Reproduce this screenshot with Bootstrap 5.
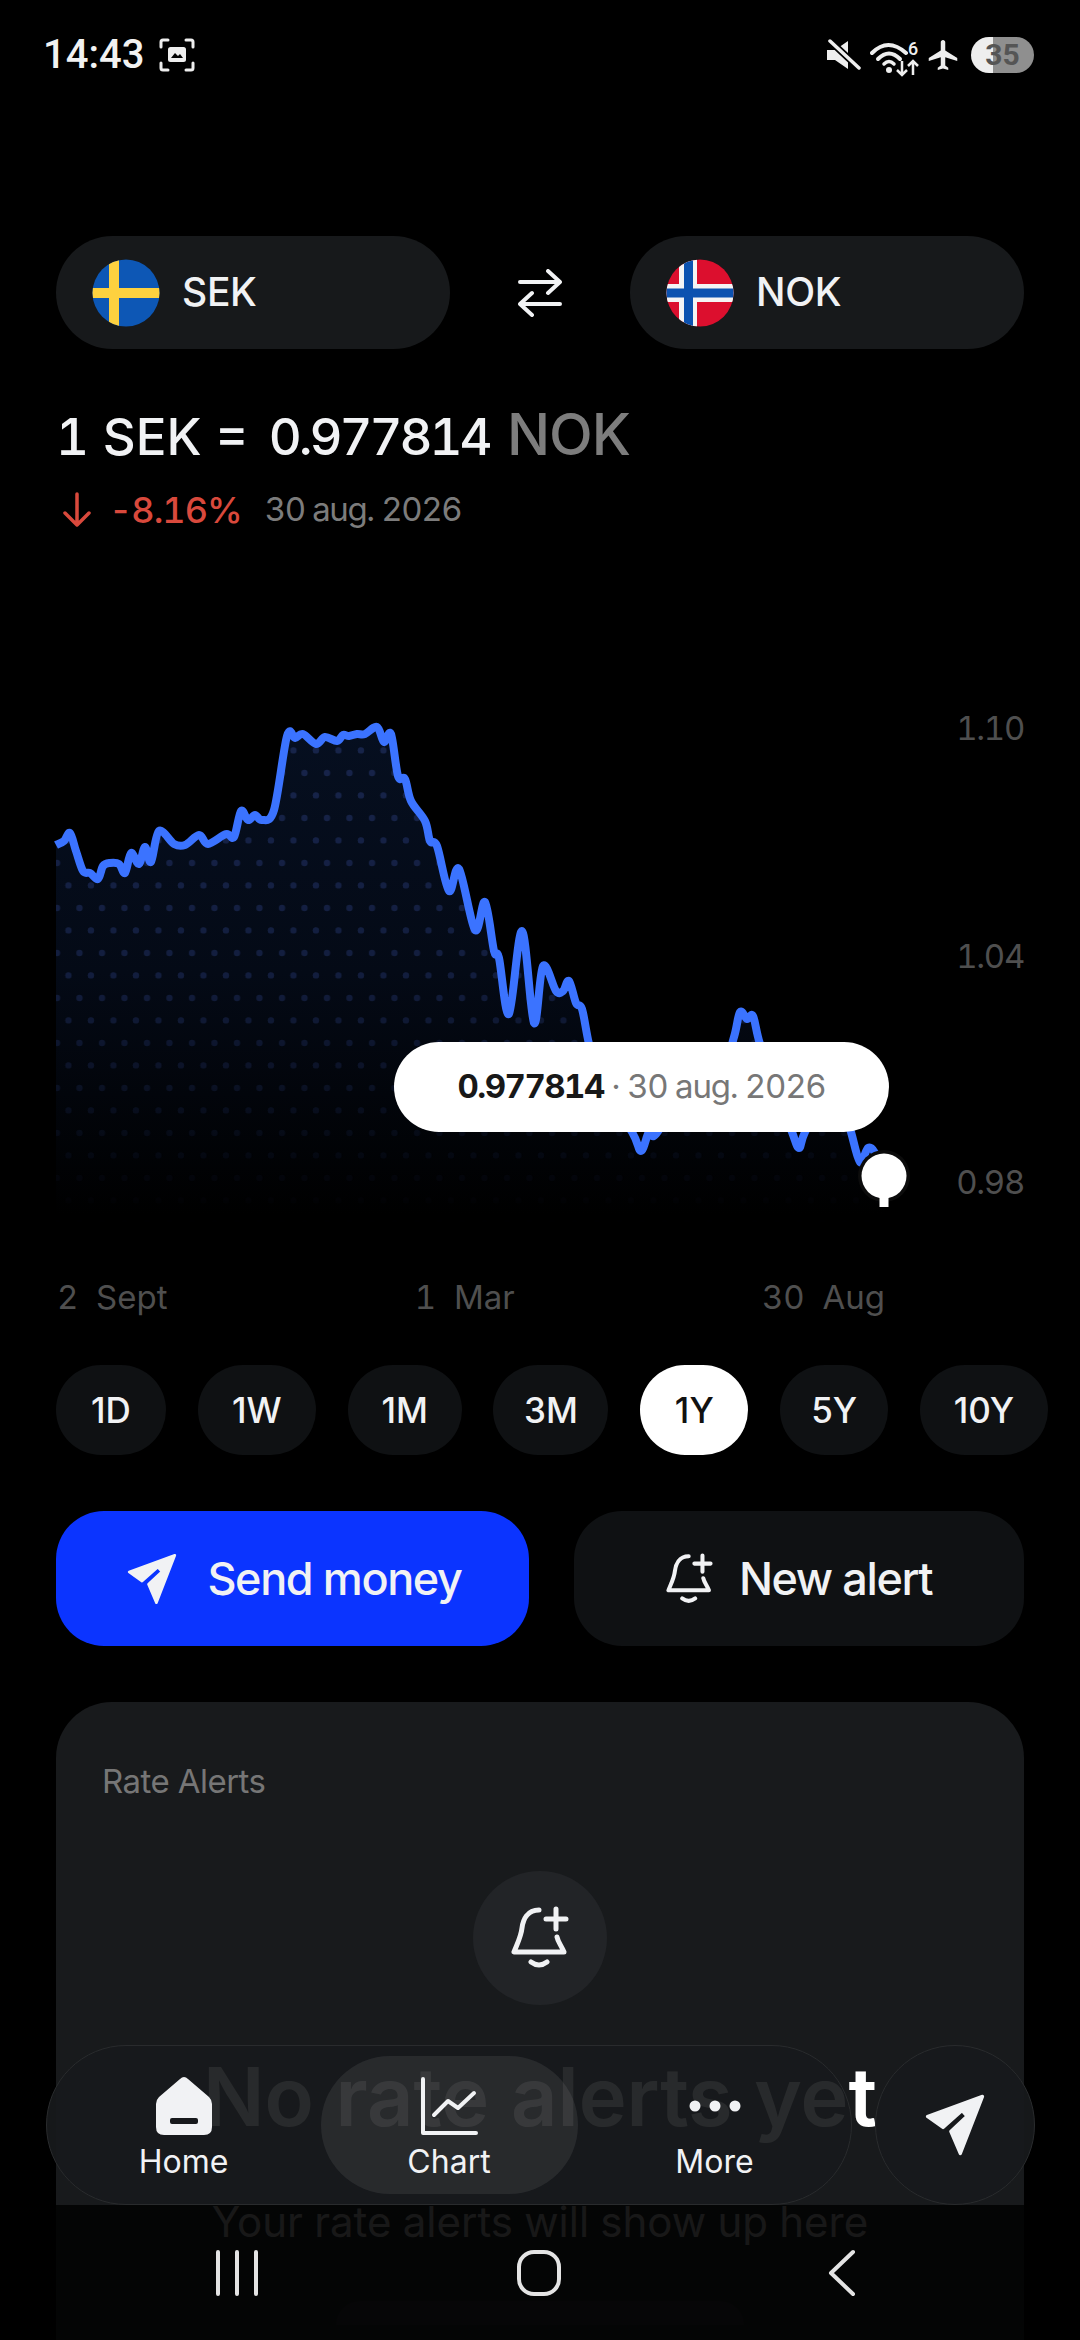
<!DOCTYPE html>
<html lang="en">
<head>
  <meta charset="UTF-8"/>
  <meta name="viewport" content="width=device-width, initial-scale=1.0"/>
  <title>SEK / NOK chart</title>
  <link href="https://cdn.jsdelivr.net/npm/bootstrap@5.3.0/dist/css/bootstrap.min.css" rel="stylesheet"/>
  <script src="https://cdn.jsdelivr.net/npm/bootstrap@5.3.0/dist/js/bootstrap.bundle.min.js" defer></script>
  <style>
    :root { --app-white: #f1f2f4; --app-pill: #17191b; --app-dark-btn: #0f1113; }

    body {
      width: 1080px;
      height: 2340px;
      overflow: hidden;
      background: #000;
      color: var(--app-white);
      font-family: "Inter", "Liberation Sans", sans-serif;
      font-variant-numeric: tabular-nums;
      position: relative;
    }

    /* status bar */
    .sbar { height: 110px; padding: 0 46px 0 43px; }
    .sbar-time { font: 500 40px/1 "Roboto", sans-serif; color: #f2f2f2; margin-right: 15px; }
    .sbar-batt {
      width: 63px; height: 36px; border-radius: 18px; margin-left: 13px;
      background: linear-gradient(90deg, #eeeeee 35%, #8f8f8f 35%);
      color: #555; font: 700 30px/36px "Roboto", sans-serif; text-align: center;
    }

    /* currency selectors */
    .pair { margin-top: 126px; padding: 0 56px; }
    .cur-pill {
      width: 394px; height: 113px; border-radius: 57px; background: var(--app-pill);
      padding-left: 36px; gap: 22px; font-size: 39px; font-weight: 500; letter-spacing: -0.3px;
    }
    .cur-flag { width: 68px; height: 68px; }

    .rate-line {
      margin: 50px 0 0 56px; height: 72px; line-height: 72px;
      font-size: 51px; font-weight: 500; white-space: pre;
    }
    .rate-num { letter-spacing: -3px; margin-left: -7px; }
    .rate-unit { font-size: 57px; color: #7d7d7d; letter-spacing: -1px; margin-left: 3px; }
    .change-row { margin: 17px 0 0 62px; height: 44px; }
    .change-pct { color: #d9493c; font-size: 36px; font-weight: 500; margin-left: 17px; letter-spacing: -1px; }
    .change-date { color: #7c7c7c; font-size: 33px; margin-left: 23px; letter-spacing: -1.4px; }

    /* chart */
    .chart-box { margin-top: 168px; height: 540px; position: relative; }
    .y-tick { position: absolute; right: 56px; color: #4f4f4f; font-size: 33px; line-height: 40px; letter-spacing: -1.3px; }
    .chart-tip {
      position: absolute; left: 394px; top: 342px; width: 495px; height: 90px; border-radius: 45px;
      background: #fff; color: #777; font-size: 33px; letter-spacing: -1.25px;
    }
    .chart-tip b { color: #181818; font-weight: 700; letter-spacing: -1.5px; }
    .x-ticks {
      margin: 37px 0 0 57px; width: 828px; height: 40px; line-height: 40px;
      color: #4f4f4f; font-size: 33px; white-space: pre;
    }

    /* range selector */
    .range-row { margin-top: 48px; padding: 0 32px 0 56px; }
    .range-btn {
      width: 108px; height: 90px; border-radius: 45px; border: 0; padding: 0;
      background: var(--app-dark-btn); color: var(--app-white); font-size: 35px; font-weight: 500;
    }
    .range-btn:nth-child(1) { width: 110px; }
    .range-btn:nth-child(2) { width: 118px; }
    .range-btn:nth-child(3) { width: 114px; }
    .range-btn:nth-child(4) { width: 115px; }
    .range-btn:nth-child(7) { width: 128px; }
    .range-btn.is-on { background: #fff; color: #111; }

    /* action buttons */
    .act-row { margin-top: 56px; padding: 0 56px; }
    .act-btn {
      height: 135px; border-radius: 48px; border: 0; gap: 26px;
      font-size: 45px; font-weight: 500; letter-spacing: -1.4px; color: var(--app-white);
    }
    .act-send { width: 473px; background: #0b34ff; }
    .act-send:hover, .act-send:active { background: #0b34ff; color: var(--app-white); }
    .act-alert { width: 450px; background: var(--app-dark-btn); }
    .ico-plane { width: 58px; height: 58px; fill: currentColor; stroke: currentColor; stroke-width: 3; stroke-linejoin: round; }
    .ico-plane-lg { width: 70px; height: 70px; color: var(--app-white); }
    .ico-bell { fill: none; stroke: currentColor; stroke-width: 5; stroke-linecap: round; stroke-linejoin: round; }

    /* alerts panel */
    .alert-panel {
      margin: 56px 56px 0; height: 638px; border: 0; border-radius: 56px 56px 0 0;
      background: #181a1c; color: var(--app-white); padding-top: 59px;
    }
    .panel-head { margin-left: 46px; font-size: 33px; line-height: 40px; color: #767676; letter-spacing: -0.5px; }
    .panel-ico {
      width: 134px; height: 134px; margin: 70px auto 0; background: #222427;
    }
    .panel-title { margin: 42px 0 0; text-align: center; font-size: 81px; line-height: 100px; font-weight: 600; color: #fff; }
    .panel-sub { margin: 50px 0 0; text-align: center; font-size: 42px; line-height: 50px; color: #7b7b7b; }
    .panel-cta { width: 408px; height: 24px; margin: 54px auto 0; border-radius: 55px 55px 0 0; background: #1f2123; }

    /* bottom navigation */
    .bottom-shade { position: absolute; left: 0; right: 0; top: 2205px; bottom: 0; background: rgba(0, 0, 0, .8); }
    .float-bar {
      position: absolute; top: 2045px; height: 160px; border-radius: 80px;
      background: rgba(24, 26, 28, .93); border: 1.5px solid #292b2d;
    }
    .float-tabs { left: 46px; width: 806px; padding: 0 8px; }
    .float-send { left: 875px; width: 160px; }
    .tab-item {
      width: 257px; height: 138px; border-radius: 69px; gap: 8px;
      font-size: 32px; line-height: 38px; color: var(--app-white); padding-top: 8px;
    }
    .tab-item.is-on { background: rgba(255, 255, 255, .075); }
    .tab-ico { width: 58px; height: 58px; }

    .sys-nav { position: absolute; left: 0; right: 0; top: 2248px; height: 50px; }
    .sys-nav svg { position: absolute; top: 0; stroke: #e4e4e4; fill: none; stroke-width: 4; stroke-linecap: round; stroke-linejoin: round; }
    .sys-recent { left: 214px; }
    .sys-home { left: 514px; }
    .sys-back { left: 824px; }
  </style>
</head>
<body>

<svg width="0" height="0" class="position-absolute">
  <defs>
    <symbol id="plane" viewBox="22 12 66 66">
      <path d="M81 18 L29 37 L43.7 47.4 L61.7 31.4 L66.3 36.6 L51 51 L60 72 Z"/>
    </symbol>
    <symbol id="bell" viewBox="22 16 58 64">
      <path d="M50 20 C38 20 34 30 33 38 C32 47 28 54 25 62 H75 C72 55 69 52 68 47"/>
      <path d="M57 29 H77 M67 19 V39"/>
      <path d="M42 72 Q50 78 58 72"/>
    </symbol>
  </defs>
</svg>

<div class="sbar d-flex align-items-center">
  <span class="sbar-time">14:43</span>
  <svg width="36" height="34" viewBox="0 0 36 34" fill="none" stroke="#eee" stroke-width="3" stroke-linecap="round">
    <path d="M2 9 V4 Q2 2 4 2 H9 M27 2 H32 Q34 2 34 4 V9 M34 25 V30 Q34 32 32 32 H27 M9 32 H4 Q2 32 2 30 V25"/>
    <rect x="9" y="9" width="18" height="15" rx="2.5" fill="#eee" stroke="none"/>
    <path d="M12 20 L16 15 L19 18 L21 16 L24 20 Z" fill="#000" stroke="none"/>
  </svg>
  <div class="ms-auto d-flex align-items-center">
    <svg width="36" height="32" viewBox="0 0 36 32">
      <path d="M1 11 H9 L22 2 V30 L9 21 H1 Z" fill="#eee"/>
      <path d="M4 2 L33 29" stroke="#000" stroke-width="7"/>
      <path d="M4 2 L33 29" stroke="#eee" stroke-width="3.5" stroke-linecap="round"/>
    </svg>
    <svg class="ms-2" width="50" height="44" viewBox="0 -8 50 44" fill="none" stroke="#eee">
      <path d="M2 12 Q18 -4 36 12" stroke-width="4" stroke-linecap="round"/>
      <path d="M8 18 Q19 7 30 18" stroke-width="4" stroke-linecap="round"/>
      <path d="M14 23 Q19 18 24 23" stroke-width="3.5" stroke-linecap="round"/>
      <circle cx="19" cy="29" r="3" fill="#eee" stroke="none"/>
      <path d="M32 20 V34 M27 29 L32 34 L37 29 M43 34 V20 M38 25 L43 20 L48 25" stroke-width="2.5"/>
      <text x="43" y="14" text-anchor="middle" fill="#eee" stroke="none" font-family="Roboto, sans-serif" font-size="18" font-weight="500">6</text>
    </svg>
    <svg class="ms-2" width="30" height="30" viewBox="2 2 19 20" fill="#eee">
      <path d="M21 16v-2l-8-5V3.5c0-.83-.67-1.5-1.5-1.5S10 2.67 10 3.5V9l-8 5v2l8-2.5V19l-2 1.5V22l3.5-1 3.5 1v-1.5L13 19v-5.5l8 2.5z"/>
    </svg>
    <div class="sbar-batt">35</div>
  </div>
</div>

<div class="pair d-flex align-items-center justify-content-between">
  <div class="cur-pill d-flex align-items-center">
    <svg class="cur-flag" viewBox="0 0 68 68">
      <clipPath id="flagClipA"><circle cx="34" cy="34" r="33.5"/></clipPath>
      <g clip-path="url(#flagClipA)">
        <rect width="68" height="68" fill="#0d57b5"/>
        <rect x="17" width="10" height="68" fill="#fdd13f"/>
        <rect y="29" width="68" height="10" fill="#fdd13f"/>
      </g>
    </svg>
    <span>SEK</span>
  </div>
  <svg width="44" height="48" viewBox="0 0 44 48" fill="none" stroke="#f1f2f4" stroke-width="4" stroke-linecap="round" stroke-linejoin="round">
    <path d="M2 13 H42 L30 2 M42 13 L30 24"/>
    <path d="M42 35 H2 L14 24 M2 35 L14 46"/>
  </svg>
  <div class="cur-pill d-flex align-items-center">
    <svg class="cur-flag" viewBox="0 0 68 68">
      <clipPath id="flagClipB"><circle cx="34" cy="34" r="33.5"/></clipPath>
      <g clip-path="url(#flagClipB)">
        <rect width="68" height="68" fill="#dc0f2e"/>
        <rect x="13" width="18" height="68" fill="#f4f4f4"/>
        <rect y="25" width="68" height="18" fill="#f4f4f4"/>
        <rect x="18" width="9" height="68" fill="#0c52b0"/>
        <rect y="29.5" width="68" height="9" fill="#0c52b0"/>
      </g>
    </svg>
    <span>NOK</span>
  </div>
</div>

<div class="rate-line">1 SEK =  <span class="rate-num">0.977814</span><span class="rate-unit"> NOK</span></div>
<div class="change-row d-flex align-items-center">
  <svg width="30" height="36" viewBox="0 0 30 36" fill="none" stroke="#d9493c" stroke-width="3.5" stroke-linecap="round" stroke-linejoin="round">
    <path d="M15 2 V33 M3 21 L15 33 L27 21"/>
  </svg>
  <span class="change-pct">-8.16%</span>
  <span class="change-date">30 aug. 2026</span>
</div>

<div class="chart-box">
  <svg class="d-block" width="1080" height="540" viewBox="0 700 1080 540">
    <defs>
      <linearGradient id="areaFade" gradientUnits="userSpaceOnUse" x1="0" y1="730" x2="0" y2="1215">
        <stop offset="0" stop-color="#060f20"/>
        <stop offset=".5" stop-color="#040a16"/>
        <stop offset="1" stop-color="#000"/>
      </linearGradient>
      <linearGradient id="dotFade" gradientUnits="userSpaceOnUse" x1="0" y1="730" x2="0" y2="1225">
        <stop offset="0" stop-color="#fff" stop-opacity=".8"/>
        <stop offset=".5" stop-color="#fff" stop-opacity=".62"/>
        <stop offset=".8" stop-color="#fff" stop-opacity=".22"/>
        <stop offset="1" stop-color="#fff" stop-opacity="0"/>
      </linearGradient>
      <mask id="dotMask" maskUnits="userSpaceOnUse" x="0" y="700" width="1080" height="540">
        <rect x="0" y="700" width="1080" height="540" fill="url(#dotFade)"/>
      </mask>
      <pattern id="dotGrid" patternUnits="userSpaceOnUse" width="22.5" height="45">
        <circle cx="12" cy="8" r="3.2" fill="#1c2a56"/>
        <circle cx="0.9" cy="30.4" r="3.2" fill="#1c2a56"/>
        <circle cx="23.4" cy="30.4" r="3.2" fill="#1c2a56"/>
      </pattern>
    </defs>
    <path id="chartArea" fill="url(#areaFade)"/>
    <path id="chartDots" fill="url(#dotGrid)" mask="url(#dotMask)"/>
    <path id="chartLine" fill="none" stroke="#3b73ff" stroke-width="8" stroke-linejoin="round"/>
    <circle cx="884" cy="1176" r="26" fill="#0c0c0c"/>
    <rect x="879.5" y="1180" width="9" height="27" fill="#fff"/>
    <circle cx="884" cy="1176" r="22.5" fill="#fff"/>
  </svg>
  <span class="y-tick" style="top: 8px">1.10</span>
  <span class="y-tick" style="top: 236px">1.04</span>
  <span class="y-tick" style="top: 462px">0.98</span>
  <div class="chart-tip d-flex align-items-center justify-content-center"><b>0.977814</b>&nbsp;·&nbsp;30 aug. 2026</div>
</div>
<div class="x-ticks d-flex justify-content-between">
  <span>2  Sept</span><span>1  Mar</span><span>30  Aug</span>
</div>

<div class="range-row d-flex justify-content-between">
  <button class="btn range-btn">1D</button>
  <button class="btn range-btn">1W</button>
  <button class="btn range-btn">1M</button>
  <button class="btn range-btn">3M</button>
  <button class="btn range-btn is-on">1Y</button>
  <button class="btn range-btn">5Y</button>
  <button class="btn range-btn">10Y</button>
</div>

<div class="act-row d-flex justify-content-between">
  <button class="btn act-btn act-send d-flex align-items-center justify-content-center">
    <svg class="ico-plane"><use href="#plane"/></svg>Send money
  </button>
  <button class="btn act-btn act-alert d-flex align-items-center justify-content-center">
    <svg class="ico-bell" width="47" height="52"><use href="#bell"/></svg>New alert
  </button>
</div>

<div class="card alert-panel">
  <div class="panel-head">Rate Alerts</div>
  <div class="panel-ico rounded-circle d-flex align-items-center justify-content-center">
    <svg class="ico-bell" width="58" height="64"><use href="#bell"/></svg>
  </div>
  <p class="panel-title">No rate alerts yet</p>
  <p class="panel-sub">Your rate alerts will show up here</p>
  <div class="panel-cta"></div>
</div>

<div class="bottom-shade"></div>

<nav class="float-bar float-tabs d-flex align-items-center justify-content-between">
  <div class="tab-item d-flex flex-column align-items-center justify-content-center">
    <svg class="tab-ico" viewBox="0 0 58 58">
      <path fill="#f1f2f4" fill-rule="evenodd" d="M29 0 Q31 0 33 2 L54 20 Q57 23 57 27 V50 Q57 58 49 58 H9 Q1 58 1 50 V27 Q1 23 4 20 L25 2 Q27 0 29 0 Z M17 41 Q15 41 15 43 V45 Q15 47 17 47 H41 Q43 47 43 45 V43 Q43 41 41 41 Z"/>
    </svg>
    <span>Home</span>
  </div>
  <div class="tab-item is-on d-flex flex-column align-items-center justify-content-center">
    <svg class="tab-ico" viewBox="0 0 58 58" fill="none" stroke="#f1f2f4" stroke-width="4" stroke-linecap="round" stroke-linejoin="round">
      <path d="M3 2 V56 H56"/>
      <path d="M14 38 L28 24 L38 31 L54 16"/>
    </svg>
    <span>Chart</span>
  </div>
  <div class="tab-item d-flex flex-column align-items-center justify-content-center">
    <svg class="tab-ico" viewBox="0 0 58 58" fill="#f1f2f4">
      <circle cx="9" cy="29" r="5.5"/><circle cx="29" cy="29" r="5.5"/><circle cx="49" cy="29" r="5.5"/>
    </svg>
    <span>More</span>
  </div>
</nav>
<div class="float-bar float-send d-flex align-items-center justify-content-center">
  <svg class="ico-plane ico-plane-lg"><use href="#plane"/></svg>
</div>

<div class="sys-nav">
  <svg class="sys-recent" width="46" height="50" viewBox="0 0 46 50"><path d="M4 4 V46 M23 4 V46 M42 4 V46"/></svg>
  <svg class="sys-home" width="50" height="50" viewBox="0 0 50 50"><rect x="5" y="4" width="40" height="42" rx="15"/></svg>
  <svg class="sys-back" width="36" height="50" viewBox="0 0 36 50"><path d="M29 4 L7 25 L29 46"/></svg>
</div>

<script>
  // price series, sampled in page pixels; the stretches under the tooltip are guessed
  const series = [
    [56,845],[64,841],[70,833],[76,851],[83,871],[90,873],[98,879],[103,866],[110,863],[119,864],
    [125,873],[131,853],[139,864],[145,847],[151,862],[159,831],[174,844],[185,845],[199,835],[208,844],
    [226,834],[234,837],[241,811],[248,820],[255,815],[262,820],[274,810],[287,736],[295,738],[303,734],
    [316,744],[325,737],[337,741],[343,735],[349,736],[357,734],[365,734],[377,727],[384,742],[391,734],
    [398,776],[405,779],[411,801],[425,821],[430,841],[437,846],[449,891],[459,869],[475,930],[485,902],
    [494,951],[499,958],[509,1014],[522,931],[534,1023],[543,966],[556,991],[563,991],[569,981],[576,1003],
    [582,1009],[589,1044],[600,1084],[632,1132],[641,1151],[649,1132],[656,1134],[686,1090],[721,1073],[734,1037],
    [740,1012],[747,1019],[753,1016],[760,1044],[777,1090],[792,1132],[799,1148],[805,1132],[827,1090],[842,1101],
    [851,1132],[860,1162],[868,1148],[875,1153],[884,1176]
  ];

  function smoothPath(pts) {
    let d = "M" + pts[0][0] + " " + pts[0][1];
    for (let i = 0; i < pts.length - 1; i++) {
      const p0 = pts[i - 1] || pts[i], p1 = pts[i], p2 = pts[i + 1], p3 = pts[i + 2] || p2;
      const c1x = p1[0] + (p2[0] - p0[0]) / 6, c1y = p1[1] + (p2[1] - p0[1]) / 6;
      const c2x = p2[0] - (p3[0] - p1[0]) / 6, c2y = p2[1] - (p3[1] - p1[1]) / 6;
      d += "C" + c1x.toFixed(1) + " " + c1y.toFixed(1) + " " + c2x.toFixed(1) + " " + c2y.toFixed(1) + " " + p2[0] + " " + p2[1];
    }
    return d;
  }

  const line = smoothPath(series);
  const area = line + "L884 1240L56 1240Z";
  document.getElementById("chartLine").setAttribute("d", line);
  document.getElementById("chartArea").setAttribute("d", area);
  document.getElementById("chartDots").setAttribute("d", area);
</script>

</body>
</html>
